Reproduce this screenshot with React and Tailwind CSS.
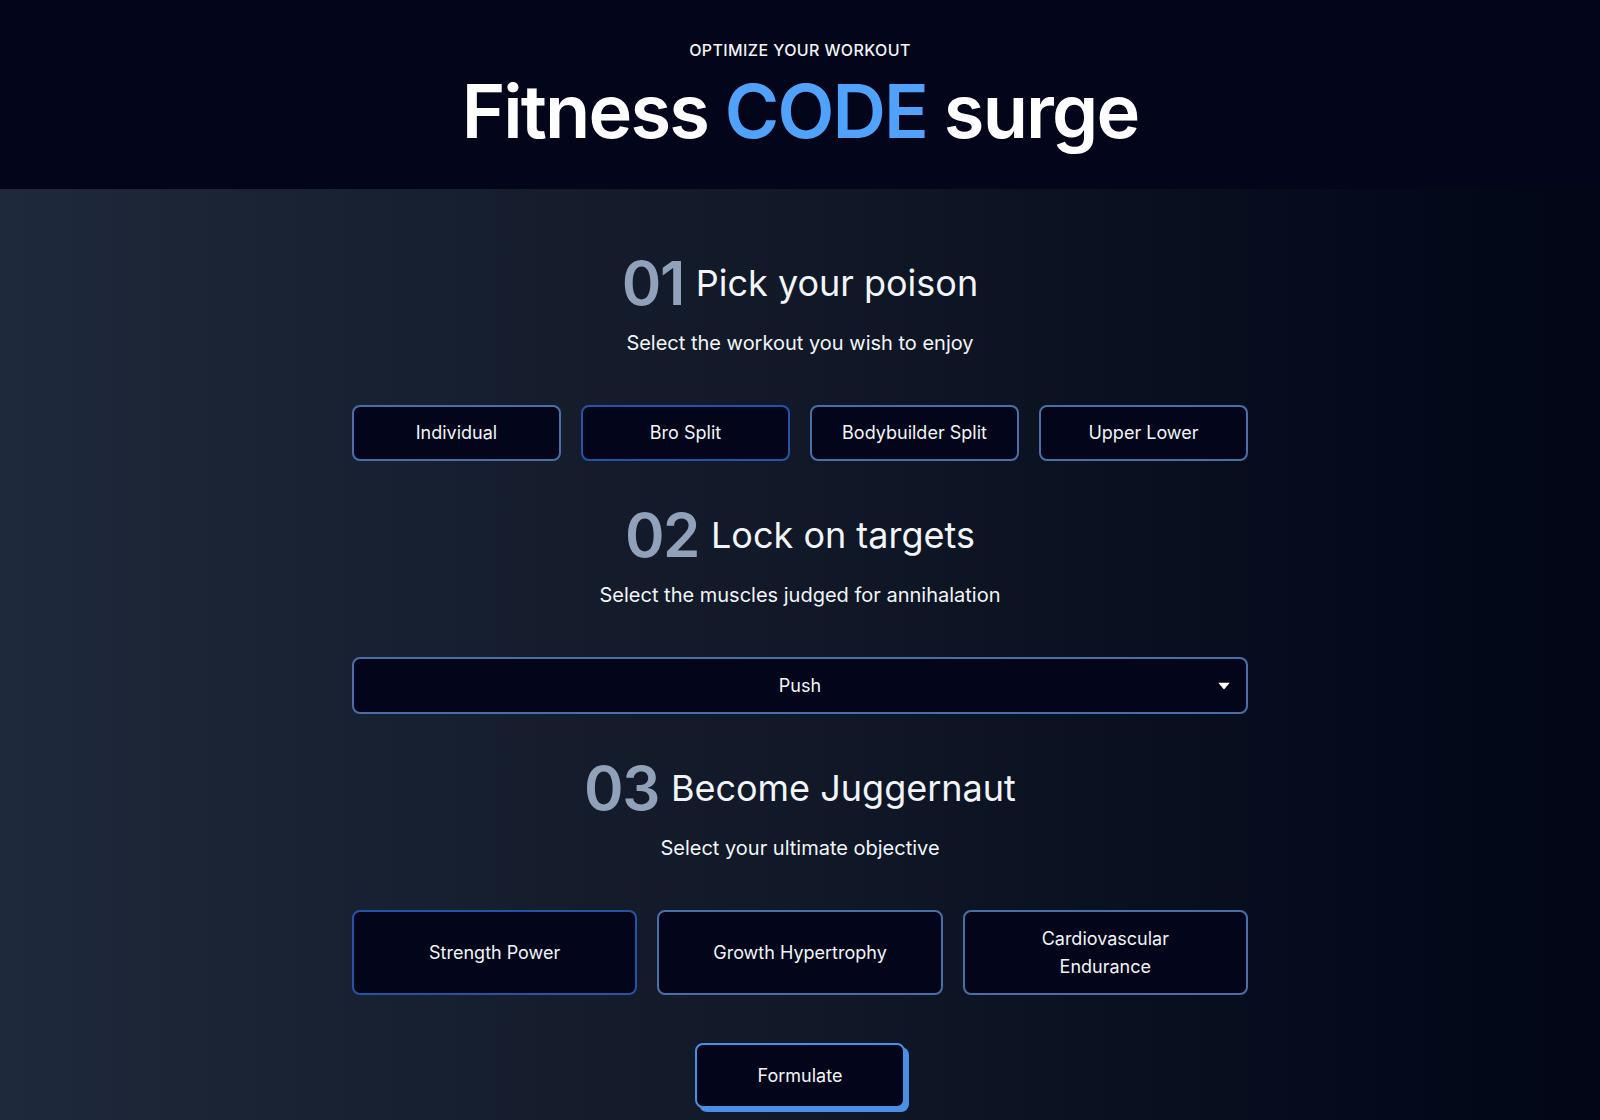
import React, { useState } from 'react';

const SPLITS = ['Individual', 'Bro Split', 'Bodybuilder Split', 'Upper Lower'];
const TARGETS = ['Push', 'Pull', 'Legs'];
const GOALS = ['Strength Power', 'Growth Hypertrophy', 'Cardiovascular Endurance'];

function StepHeading({ num, title, subtitle }) {
  return (
    <div className="flex flex-col items-center">
      <h2 className="flex items-center gap-3">
        <span className="text-6xl font-semibold leading-none tracking-tight text-slate-400">{num}</span>
        <span className="text-4xl font-normal text-slate-100">{title}</span>
      </h2>
      <p className="mt-4 text-xl leading-7 text-slate-100">{subtitle}</p>
    </div>
  );
}

export default function App() {
  const [split, setSplit] = useState('Bro Split');
  const [target, setTarget] = useState('Push');
  const [goal, setGoal] = useState('Strength Power');

  return (
    <div className="min-h-screen bg-gradient-to-r from-[#1e293b] via-[#111827] to-[#020617] font-['Inter',sans-serif] text-slate-100">
      <header className="flex h-[189px] flex-col items-center bg-[#03061a] pt-[38px]">
        <p className="text-base font-medium uppercase tracking-wide text-slate-100">Optimize your workout</p>
        <h1 className="mt-3 text-[74px] font-semibold leading-none tracking-tight text-white">
          Fitness <span className="text-blue-400">CODE</span> surge
        </h1>
      </header>

      <main className="mx-auto flex max-w-4xl flex-col pt-16">
        <StepHeading num="01" title="Pick your poison" subtitle="Select the workout you wish to enjoy" />
        <div className="mt-12 grid grid-cols-4 gap-5">
          {SPLITS.map((s) => (
            <button
              key={s}
              onClick={() => setSplit(s)}
              className={`h-14 rounded-lg border-2 bg-[#03061a] text-lg text-slate-100 ${split === s ? 'border-[#2553a8]' : 'border-[#4a6ea8]'}`}
            >
              {s}
            </button>
          ))}
        </div>

        <div className="mt-11">
          <StepHeading num="02" title="Lock on targets" subtitle="Select the muscles judged for annihalation" />
        </div>
        <div className="relative mt-12">
          <select
            value={target}
            onChange={(e) => setTarget(e.target.value)}
            className="h-[57px] w-full appearance-none rounded-lg border-2 border-[#4a6ea8] bg-[#03061a] text-lg text-slate-100 outline-none [text-align-last:center]"
          >
            {TARGETS.map((t) => (
              <option key={t} value={t}>{t}</option>
            ))}
          </select>
          <svg className="pointer-events-none absolute right-[18px] top-1/2 -translate-y-1/2" width="12" height="7" viewBox="0 0 12 7">
            <path d="M0 0h12L6 7z" fill="#fff" />
          </svg>
        </div>

        <div className="mt-11">
          <StepHeading num="03" title="Become Juggernaut" subtitle="Select your ultimate objective" />
        </div>
        <div className="mt-12 grid grid-cols-3 gap-5">
          {GOALS.map((g) => (
            <button
              key={g}
              onClick={() => setGoal(g)}
              className={`h-[85px] rounded-lg border-2 bg-[#03061a] px-12 text-lg leading-7 text-slate-100 ${goal === g ? 'border-[#2553a8]' : 'border-[#4a6ea8]'}`}
            >
              {g}
            </button>
          ))}
        </div>

        <div className="mt-12 flex justify-center pb-2">
          <button className="h-[65px] w-[210px] rounded-lg border-2 border-[#4a90e2] bg-[#03061a] text-lg text-slate-100 shadow-[4px_4px_0_#4a8fe7]">
            Formulate
          </button>
        </div>
      </main>
    </div>
  );
}
